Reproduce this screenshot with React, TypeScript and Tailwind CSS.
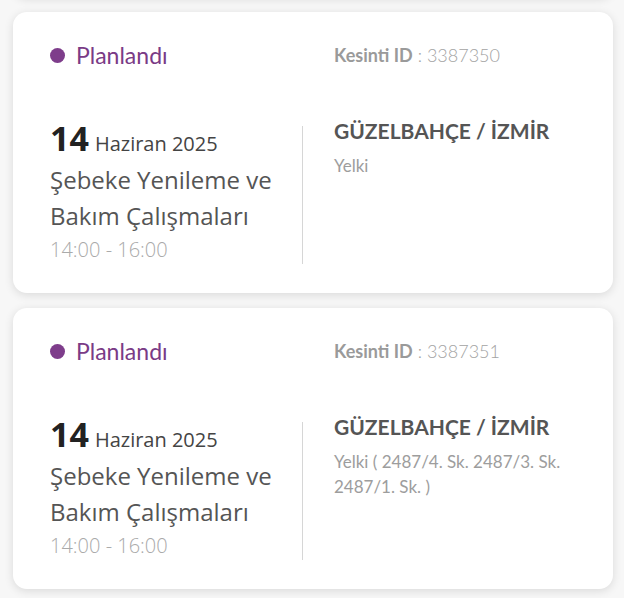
const cards = [
  { id: "3387350", place: "Yelki" },
  { id: "3387351", place: "Yelki ( 2487/4. Sk. 2487/3. Sk. 2487/1. Sk. )" },
];

function OutageCard({ id, place }: { id: string; place: string }) {
  return (
    <div className="h-[281px] shrink-0 rounded-[14px] bg-white px-[37px] pt-[31px] shadow-[0_2px_10px_rgba(0,0,0,0.12)]">
      {/* status + id */}
      <div className="flex h-[24px] items-center font-['Lato',sans-serif]">
        <div className="flex w-[253px] items-center gap-[11px]">
          <span className="h-[15px] w-[15px] rounded-full bg-[#7e3d8b]" />
          <span className="text-[23px] leading-[24px] text-[#7a3b86]">Planlandı</span>
        </div>
        <div className="pl-[31px] text-[18px] leading-[24px] text-[#a3a3a3]">
          <span className="font-bold text-[#9a9a9a]">Kesinti ID</span>
          <span className="font-light"> : {id}</span>
        </div>
      </div>

      {/* main row */}
      <div className="mt-[59px] flex h-[138px]">
        <div className="w-[253px] border-r border-[#d6d6d6] font-['Open_Sans',sans-serif]">
          <div className="-mt-[8px] flex items-baseline gap-[6px] leading-[40px]">
            <span className="text-[34px] font-bold text-[#222]">14</span>
            <span className="text-[20px] text-[#444]">Haziran 2025</span>
          </div>
          <p className="mt-[-2px] text-[24px] leading-[36px] text-[#555]">
            Şebeke Yenileme ve
            <br />
            Bakım Çalışmaları
          </p>
          <p className="mt-[1px] text-[20px] font-light leading-[30px] text-[#aaa]">14:00 - 16:00</p>
        </div>
        <div className="flex-1 pl-[31px] font-['Lato',sans-serif]">
          <p className="-mt-[8px] text-[21px] font-bold leading-[26px] text-[#555]">GÜZELBAHÇE / İZMİR</p>
          <p className="mt-[9px] w-[240px] text-[17px] leading-[25px] text-[#9d9d9d]">{place}</p>
        </div>
      </div>
    </div>
  );
}

export default function App() {
  return (
    <div className="h-[598px] overflow-hidden bg-[#f7f7f7]">
      <div className="-mt-[284px] flex flex-col gap-[15px] px-[13px] pr-[11px]">
        <div className="h-[281px] shrink-0 rounded-[14px] bg-white shadow-[0_2px_10px_rgba(0,0,0,0.12)]" />
        {cards.map((c) => (
          <OutageCard key={c.id} id={c.id} place={c.place} />
        ))}
      </div>
    </div>
  );
}
